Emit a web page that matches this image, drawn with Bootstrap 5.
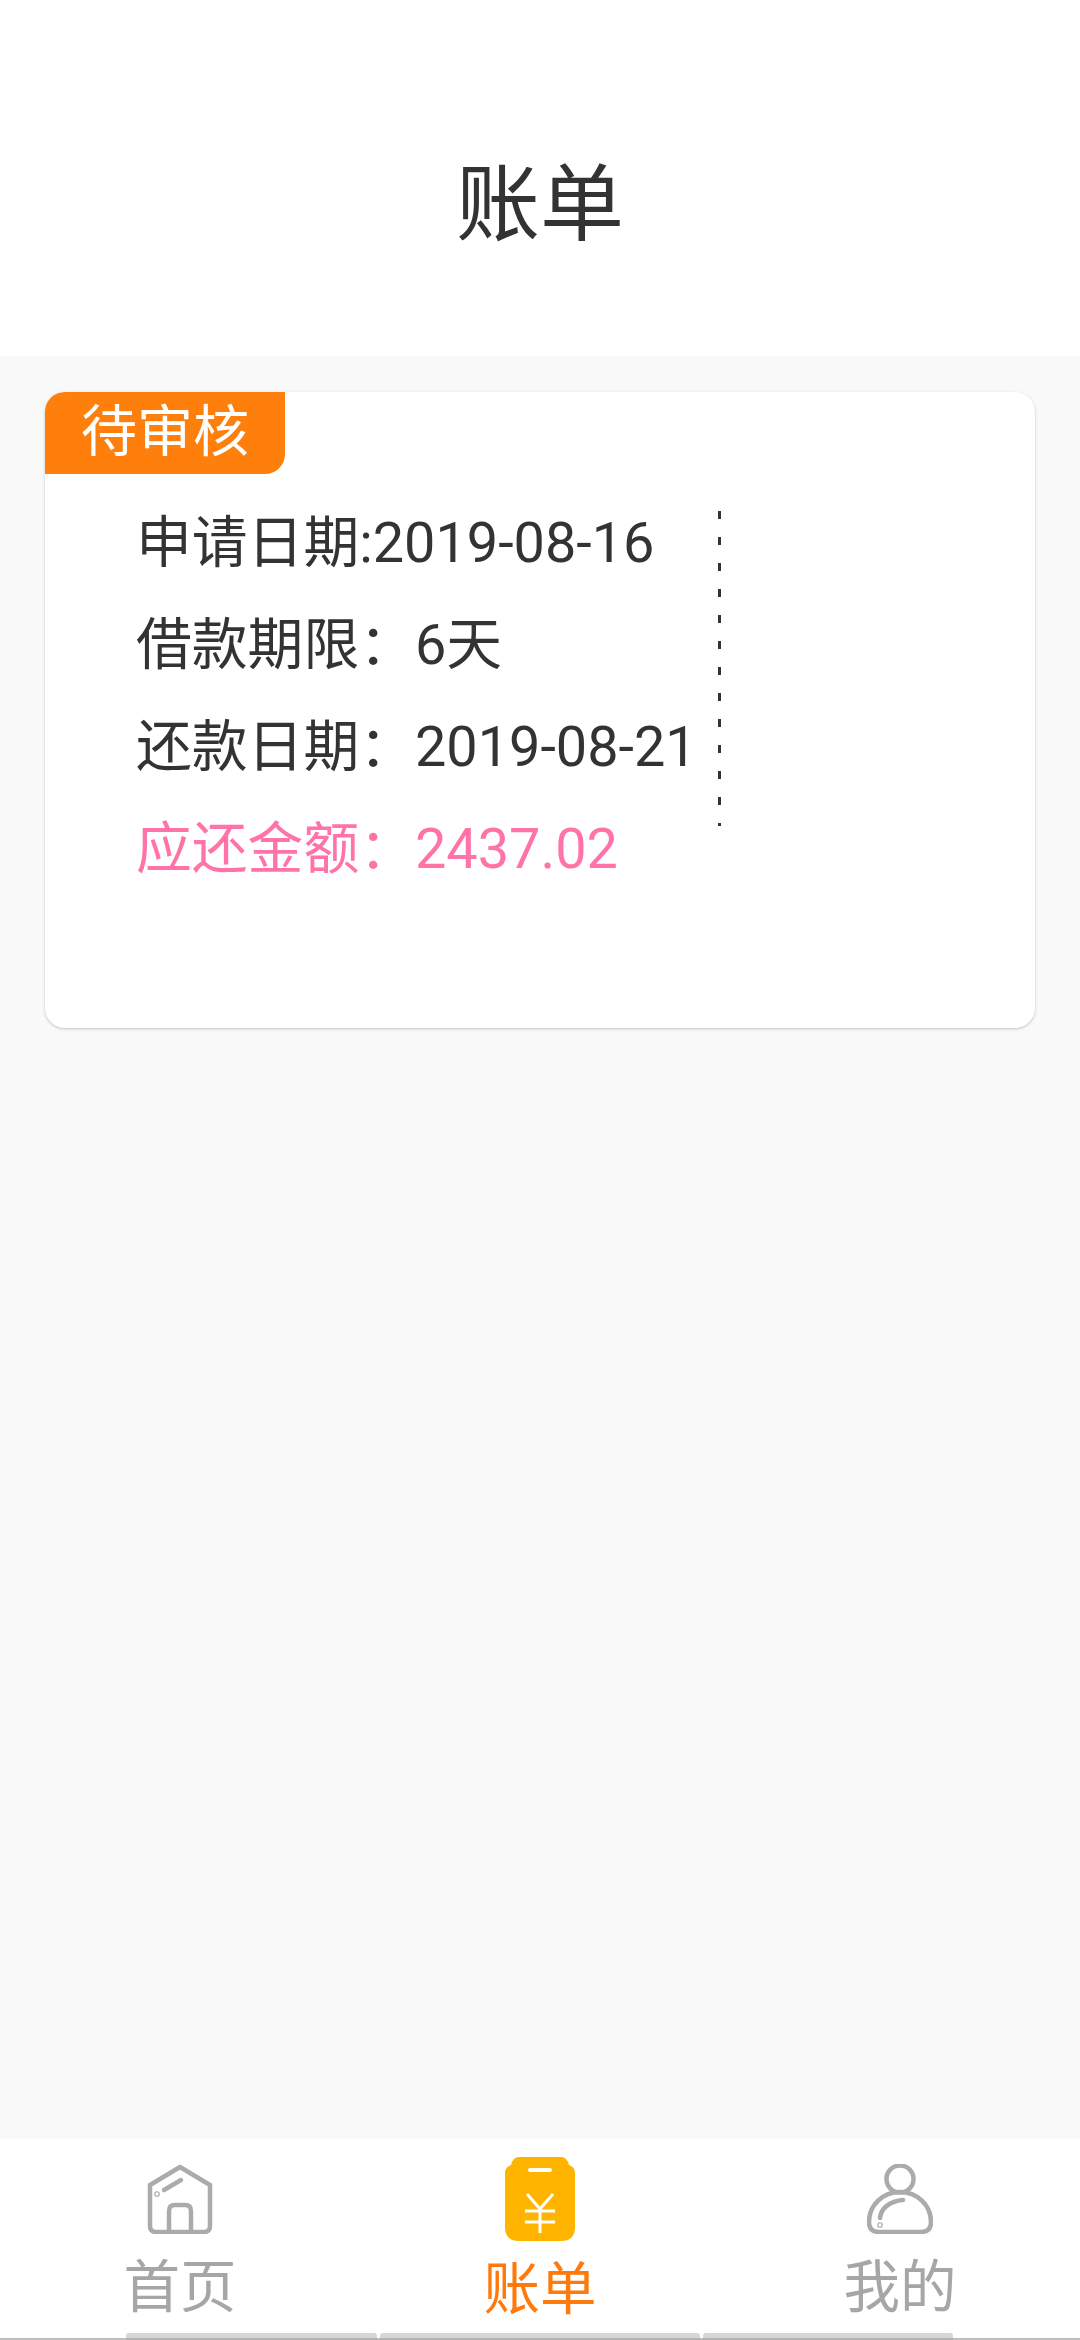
<!DOCTYPE html>
<html lang="zh"><head><meta charset="utf-8">
<link rel="stylesheet" href="https://cdn.jsdelivr.net/npm/bootstrap@5.3.0/dist/css/bootstrap.min.css">
<style>
html,body{height:2340px;margin:0;}
body{background:#f9f9f9;font-family:Roboto,"Noto Sans CJK SC",sans-serif;color:#333;overflow:hidden;}
.page-wrap{height:2340px;}
.top-title{height:356px;background:#fff;font-size:84px;line-height:1;padding-top:164px;color:#333;}
.bill-box{margin:36px 45px 0 45px;height:636px;background:#fff;border-radius:20px;box-shadow:0 1px 3px rgba(0,0,0,.22);overflow:hidden;flex:none;}
.state-tag{width:240px;height:82px;background:#ff7f0c;color:#fff;font-size:56px;line-height:80px;border-bottom-right-radius:20px;text-align:center;}
.bill-body{padding-left:91px;margin-top:18px;}
.bill-lines{width:582px;font-size:55.8px;line-height:102px;white-space:nowrap;}
.bill-lines div{height:102px;}
.dash-rule{width:3px;height:315px;margin-top:19px;background:repeating-linear-gradient(to bottom,#333 0 8px,transparent 8px 26px);}
.pinkline{color:#ff73a8;}
.tab-bar{height:201px;background:#fff;position:relative;}
.tab-cell{width:360px;}
.tab-text{font-size:56.5px;line-height:1;color:#a6a6a6;}
.tab-on{color:#ff7a0a;}
.nav-line{position:absolute;left:0;right:0;bottom:0;height:2px;background:#bdbdbd;}
.nav-seg{position:absolute;bottom:0;height:7px;border-radius:3px 3px 0 0;background:linear-gradient(to bottom,#d6d6d6 0 5px,#b3b3b3 5px 7px);}
.ico-gap{margin-top:25px;}
.txt-gap{margin-top:26px;}
.ico-on{margin-top:18px;}
.txt-on{margin-top:21px;}
</style></head><body>
<div class="page-wrap d-flex flex-column">
<div class="top-title text-center">账单</div>
<div class="bill-box">
<div class="state-tag">待审核</div>
<div class="bill-body d-flex">
<div class="bill-lines">
<div>申请日期:2019-08-16</div>
<div>借款期限：6天</div>
<div>还款日期：2019-08-21</div>
<div class="pinkline">应还金额：2437.02</div>
</div>
<span class="dash-rule"></span>
</div></div>
<div class="tab-bar mt-auto d-flex justify-content-center">
<div class="tab-cell d-flex flex-column align-items-center">
<svg class="ico-gap" width="66" height="70" viewBox="0 0 66 70" fill="none" stroke="#ababab" stroke-width="4.5" stroke-linejoin="round" stroke-linecap="round"><path d="M3 21 33 3l30 18v41q0 6-6 6H9q-6 0-6-6z"/><path d="M22 67V47q0-6 6-6h10q6 0 6 6v20M17 26l17-10"/><circle cx="10" cy="30" r=".6"/></svg>
<div class="tab-text txt-gap">首页</div></div>
<div class="tab-cell d-flex flex-column align-items-center">
<svg class="ico-on" width="70" height="84" viewBox="0 0 70 84"><path d="M14 0H56Q62 0 64 8Q70 10 70 16V70Q70 84 56 84H14Q0 84 0 70V16Q0 10 6 8Q8 0 14 0Z" fill="#ffb400"/><path d="M25 13h20" stroke="#fff" stroke-width="4" stroke-linecap="round"/><path d="M22 37l13 15 13-15M20 54h30M20 65h30M35 52v24" stroke="#fff" stroke-width="3" fill="none"/></svg>
<div class="tab-text tab-on txt-on">账单</div></div>
<div class="tab-cell d-flex flex-column align-items-center">
<svg class="ico-gap" width="66" height="70" viewBox="0 0 66 70" fill="none" stroke="#ababab" stroke-width="4.5" stroke-linecap="round"><circle cx="33" cy="15" r="13.5"/><path d="M2 58C2 41 16 28 33 28s31 13 31 30q0 10-10 10H12Q2 68 2 58z"/><path d="M13 54C14 44 23 37 36 36"/><circle cx="13" cy="61" r=".6"/></svg>
<div class="tab-text txt-gap">我的</div></div>
<span class="nav-line"></span>
<span class="nav-seg" style="left:126px;width:251px"></span>
<span class="nav-seg" style="left:380px;width:320px"></span>
<span class="nav-seg" style="left:703px;width:250px"></span>
</div>
</div>
</body></html>
